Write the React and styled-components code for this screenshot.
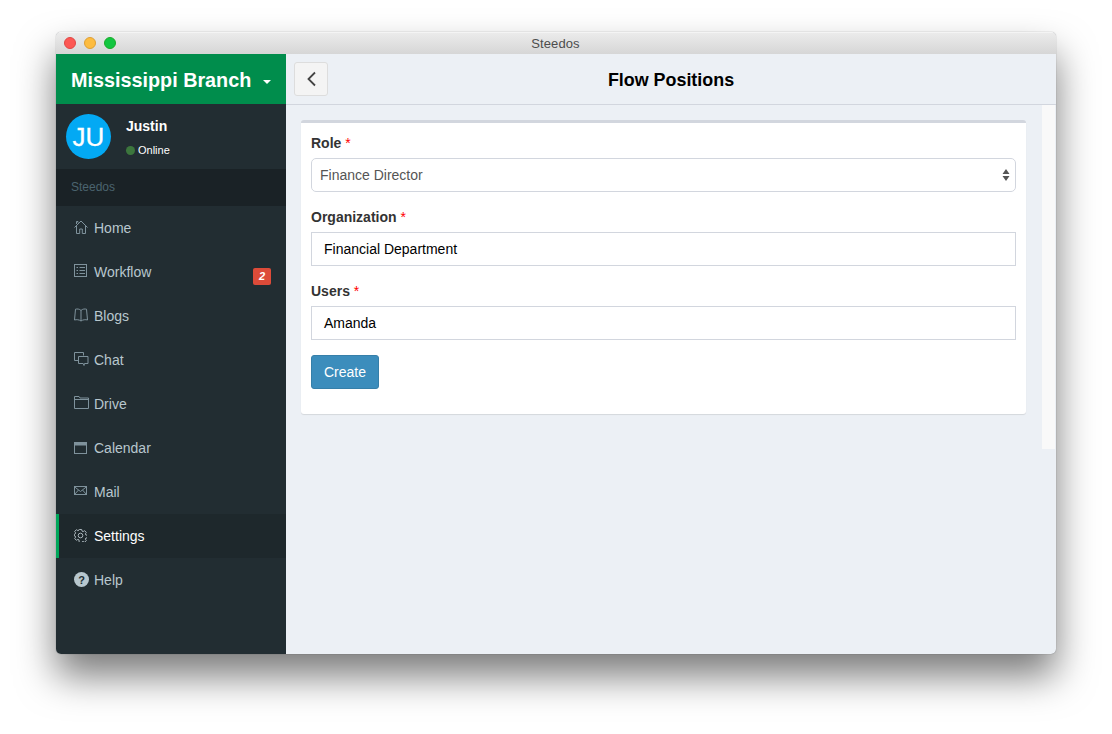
import React from 'react';
import styled, { createGlobalStyle } from 'styled-components';

const Global = createGlobalStyle`
  html, body { margin: 0; padding: 0; background: #fff; }
  body { font-family: "Liberation Sans", Arial, sans-serif; overflow: hidden; }
`;
const Page = styled.div`
  width: 1112px; height: 734px; padding: 32px 56px 0; box-sizing: border-box; overflow: hidden;
`;
const Win = styled.div`
  width: 1000px; height: 622px; border-radius: 5px; overflow: hidden; display: flex; flex-direction: column;
  box-shadow: 0 22px 38px rgba(0,0,0,.52), 0 0 1px rgba(0,0,0,.5);
  background: #ecf0f5;
`;
const TitleBar = styled.div`
  height: 22px; flex: none; display: flex; align-items: center; position: relative; padding: 0 0 1px 8px; gap: 8px;
  background: linear-gradient(#ebebeb, #d6d6d6); box-sizing: border-box; border-top: 1px solid #f4f4f4;
`;
const Light = styled.span`
  width: 12px; height: 12px; border-radius: 50%; background: ${p => p.$c}; box-sizing: border-box; border: 1px solid ${p => p.$b};
`;
const WinTitle = styled.div`
  position: absolute; left: 0; right: 1px; top: 2px; text-align: center; font-size: 13px; line-height: 17px; color: #4d4d4d; letter-spacing: .1px;
`;
const Body = styled.div`flex: 1; display: flex; min-height: 0;`;
const Side = styled.aside`width: 230px; flex: none; background: #222d32; display: flex; flex-direction: column;`;
const Brand = styled.div`
  height: 50px; background: #008d4c; color: #fff; display: flex; align-items: center; padding: 2px 0 0 15px;
  font-size: 19.8px; font-weight: 700; box-sizing: border-box;
`;
const Caret = styled.span`
  width: 0; height: 0; margin-left: 12px; margin-top: 3px; border-left: 4px solid transparent; border-right: 4px solid transparent; border-top: 4px solid #fff;
`;
const UserPanel = styled.div`height: 65px; display: flex; padding: 10px; box-sizing: border-box; gap: 15px;`;
const Avatar = styled.div`
  width: 45px; height: 45px; border-radius: 50%; background: #03a9f4; color: #fff; font-size: 26px; line-height: 46px; text-align: center; flex: none;
  -webkit-text-stroke: .3px #fff;
`;
const UserInfo = styled.div`display: flex; flex-direction: column; color: #fff; padding-top: 4px;`;
const UserName = styled.div`font-size: 14px; font-weight: 700; line-height: 17px;`;
const Status = styled.div`font-size: 11px; line-height: 13px; margin-top: 9px; display: flex; align-items: center; gap: 3px;`;
const Dot = styled.span`width: 9px; height: 9px; border-radius: 50%; background: #3c763d; display: inline-block;`;
const Section = styled.div`
  height: 37px; background: #1a2226; color: #4b646f; font-size: 12px; line-height: 36px; padding-left: 15px; box-sizing: border-box;
`;
const Item = styled.div`
  height: 44px; display: flex; align-items: flex-start; position: relative; box-sizing: border-box; padding: 12px 15px 0 15px;
  border-left: 3px solid ${p => (p.$active ? '#00a65a' : 'transparent')};
  background: ${p => (p.$active ? '#1e282c' : 'transparent')};
  color: ${p => (p.$active ? '#fff' : '#b8c7ce')};
  font-size: 14px; line-height: 20px;
`;
const IconBox = styled.span`
  width: 20px; flex: none; display: block; height: 18px; padding-top: ${p => p.$top}px; box-sizing: border-box;
  color: ${p => (p.$active ? '#aab5bb' : '#7f929c')};
  svg { display: block; }
`;
const Badge = styled.span`
  position: absolute; right: 15px; top: 18px; width: 18px; height: 17px; border-radius: 2px; background: #dd4b39; color: #fff;
  font-size: 11px; font-weight: 700; font-style: italic; line-height: 17px; text-align: center;
`;
const Main = styled.main`flex: 1; min-width: 0; display: flex; flex-direction: column;`;
const TopBar = styled.header`
  height: 51px; flex: none; box-sizing: border-box; border-bottom: 1px solid #d2d6de; position: relative; padding: 8px;
  background: #ecf0f5;
`;
const BackBtn = styled.button`
  width: 34px; height: 34px; box-sizing: border-box; padding: 0 0 0 1px; background: #f4f4f4; border: 1px solid #ddd; border-radius: 3px; display: flex; align-items: center; justify-content: center; color: #444;
`;
const PageTitle = styled.h1`
  position: absolute; left: 0; right: 0; top: 16px; margin: 0; text-align: center; font-size: 17.9px; line-height: 20px; font-weight: 700; color: #000;
`;
const Content = styled.div`flex: 1; display: flex; align-items: flex-start; min-height: 0;`;
const Pad = styled.div`flex: 1; min-width: 0; padding: 15px 16px 15px 15px;`;
const Card = styled.section`
  background: #fff; border-top: 3px solid #d2d6de; border-radius: 3px; box-shadow: 0 1px 1px rgba(0,0,0,.1); padding: 10px 10px 25px; height: 294px; box-sizing: border-box;
`;
const Field = styled.div`margin-bottom: 15px;`;
const Label = styled.label`
  display: block; font-size: 14px; font-weight: 700; line-height: 20px; color: #333; margin-bottom: 5px;
`;
const Req = styled.span`color: #f00; font-weight: 400;`;
const FakeSelect = styled.div`
  height: 34px; box-sizing: border-box; border: 1px solid #d2d6de; border-radius: 5px; padding-left: 8px; line-height: 32px; font-size: 14px; color: #555; position: relative; background: #fff;
`;
const Arrows = styled.svg`position: absolute; right: 5px; top: 9px;`;
const Input = styled.div`
  height: 34px; box-sizing: border-box; border: 1px solid #d2d6de; padding-left: 12px; line-height: 32px; font-size: 14px; color: #000; background: #fff;
`;
const Create = styled.button`
  height: 34px; width: 68px; margin-top: 0; box-sizing: border-box; padding: 0; background: #3c8dbc; border: 1px solid #367fa9; border-radius: 3px; color: #fff; font: 14px "Liberation Sans", Arial, sans-serif;
`;
const Scroll = styled.div`width: 13px; height: 344px; flex: none; background: #f9f9f9; margin-right: 1px;`;

const S = ({ w = 16, h = 16, children }) => (
  <svg width={w} height={h} viewBox={`0 0 ${w} ${h}`} fill="none" stroke="currentColor" strokeWidth={1}>{children}</svg>
);
const icons = {
  home: [2, <S w={14} h={14}><path d="M.5 7.5 7 1l6.500 6.500M2.500 5.800v7.700h3.200V9h2.600v4.500h3.200V5.800M2.500 4V1.500h1.500v1.200" /></S>],
  list: [2, <S w={14} h={14}><rect x=".5" y=".5" width="12" height="12" /><path d="M2.500 3.500h1.500M5.500 3.500h5.500M2.500 6.500h1.500M5.500 6.500h5.500M2.500 9.500h1.500M5.500 9.500h5.500" /></S>],
  book: [2, <S w={14} h={14}><path d="M7 2.500C5.500.8 3 .8 1.500 1.200L.5 12c2-.6 4.500-.4 6.500 1 2-1.400 4.500-1.600 6.500-1l-1-10.800C11 .8 8.500.8 7 2.500ZM7 2.500V13" /></S>],
  chat: [2, <S w={15} h={15}><path d="M9.500 3.500v-3H.5v8H4" /><path d="M4.500 4.500h9.500v7H10.500L10 13.500l-.8-2H4.500Z" /></S>],
  folder: [2, <S w={15} h={13}><path d="M.5 12.500V.5h4.500l1 1.500h8.500v10.500ZM.5 3.500h14" /></S>],
  calendar: [3, <S w={13} h={13}><rect x=".5" y="1.500" width="12" height="11" /><path d="M0 1h13v3.500H0Z" fill="currentColor" stroke="none" /></S>],
  mail: [4, <S w={13} h={10}><rect x=".5" y=".5" width="12" height="8" /><path d="M.5.8 6.500 5.500 12.500.8M.5 8.500 4.500 4M12.500 8.500 8.500 4" /></S>],
  gear: [3, <S w={13} h={13}><circle cx="6.500" cy="6.500" r="2.300" /><path d="M5.300.5h2.400l.3 1.600 1.200.5 1.400-.9 1.700 1.700-.9 1.400.5 1.200 1.600.3v2.400l-1.600.3-.5 1.200.9 1.400-1.700 1.700-1.400-.9-1.200.5-.3 1.600H5.300L5 10.900l-1.200-.5-1.400.9L.7 9.600l.9-1.400-.5-1.200-.6-.1V5.300l.6-.3.5-1.200-.9-1.400L2.400.7l1.400.9L5 1.100Z" /></S>],
  help: [2, <svg width="15" height="15" viewBox="0 0 15 15"><circle cx="7.500" cy="7.500" r="7.500" fill="#b8c7ce" /><text x="7.500" y="11.500" textAnchor="middle" fontFamily="Liberation Sans" fontWeight="700" fontSize="11" fill="#222d32">?</text></svg>],
};

const menu = [
  ['home', 'Home'], ['list', 'Workflow', '2'], ['book', 'Blogs'], ['chat', 'Chat'], ['folder', 'Drive'],
  ['calendar', 'Calendar'], ['mail', 'Mail'], ['gear', 'Settings'], ['help', 'Help'],
];

export default function App() {
  return (
    <Page>
      <Global />
      <Win>
        <TitleBar>
          <Light $c="#fc5753" $b="#df4744" />
          <Light $c="#fdbc40" $b="#de9f34" />
          <Light $c="#12c641" $b="#1aab29" />
          <WinTitle>Steedos</WinTitle>
        </TitleBar>
        <Body>
          <Side>
            <Brand>Mississippi Branch<Caret /></Brand>
            <UserPanel>
              <Avatar>JU</Avatar>
              <UserInfo>
                <UserName>Justin</UserName>
                <Status><Dot />Online</Status>
              </UserInfo>
            </UserPanel>
            <Section>Steedos</Section>
            {menu.map(([ic, label, badge]) => {
              const active = label === 'Settings';
              return (
                <Item key={label} $active={active}>
                  <IconBox $active={active} $top={icons[ic][0]}>{icons[ic][1]}</IconBox>
                  {label}
                  {badge && <Badge>{badge}</Badge>}
                </Item>
              );
            })}
          </Side>
          <Main>
            <TopBar>
              <BackBtn aria-label="Back">
                <svg width="12" height="16" viewBox="0 0 12 16" fill="none" stroke="currentColor" strokeWidth="1.800"><path d="M9 1.500 2.500 8 9 14.500" /></svg>
              </BackBtn>
              <PageTitle>Flow Positions</PageTitle>
            </TopBar>
            <Content>
              <Pad>
                <Card>
                  <Field>
                    <Label>Role <Req>*</Req></Label>
                    <FakeSelect>Finance Director
                      <Arrows width="8" height="14" viewBox="0 0 8 14"><path d="M4 1 7.500 6H.5ZM4 13 .5 8h7Z" fill="#555" /></Arrows>
                    </FakeSelect>
                  </Field>
                  <Field>
                    <Label>Organization <Req>*</Req></Label>
                    <Input>Financial Department</Input>
                  </Field>
                  <Field>
                    <Label>Users <Req>*</Req></Label>
                    <Input>Amanda</Input>
                  </Field>
                  <Create>Create</Create>
                </Card>
              </Pad>
              <Scroll />
            </Content>
          </Main>
        </Body>
      </Win>
    </Page>
  );
}
